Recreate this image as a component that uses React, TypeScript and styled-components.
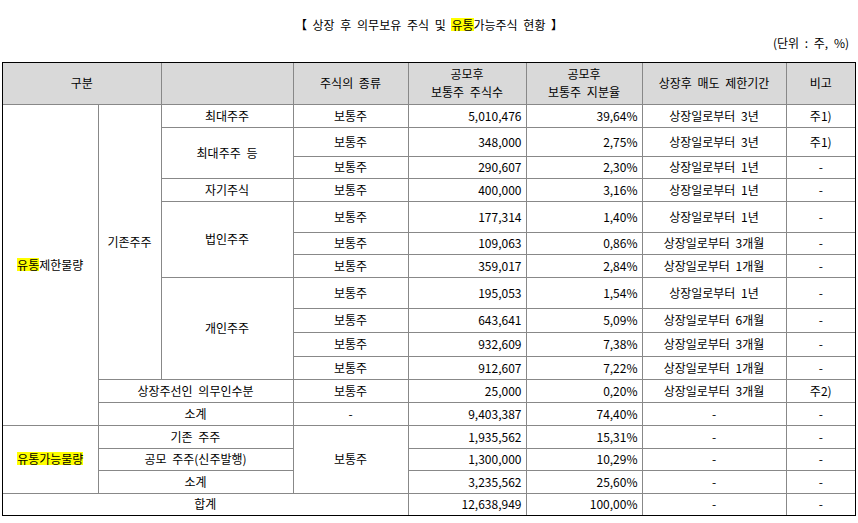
import React from "react";
import styled, { createGlobalStyle } from "styled-components";

const GlobalStyle = createGlobalStyle`
  html, body {
    margin: 0;
    padding: 0;
    background: #ffffff;
  }
  body {
    font-family: "Noto Sans CJK KR", "Noto Sans", sans-serif;
    font-size: 12px;
    color: #000000;
    word-spacing: 3px;
  }
`;

const Page = styled.div`
  width: 858px;
  box-sizing: border-box;
  padding: 0 2px;
`;

const Title = styled.div`
  padding-top: 17px;
  text-align: center;
  font-size: 12px;
  line-height: 16px;
`;

const Unit = styled.div`
  margin-top: 2px;
  padding-right: 7px;
  text-align: right;
  font-size: 12px;
  line-height: 16px;
`;

const Frame = styled.div`
  margin-top: 11px;
  border: 1px solid #000000;
`;

const Table = styled.table`
  width: 852px;
  table-layout: fixed;
  border-collapse: collapse;
  border-style: hidden;
`;

const Row = styled.tr<{ $h: number }>`
  height: ${(p) => p.$h}px;
`;

const HeadCell = styled.th`
  background: #d9d9d9;
  border: 1px solid #888888;
  font-weight: normal;
  font-size: 12px;
  line-height: 18px;
  text-align: center;
  vertical-align: middle;
  padding: 0;
`;

const Cell = styled.td<{ $align?: "center" | "right" }>`
  border: 1px solid #888888;
  font-size: 12px;
  line-height: 16px;
  padding: 0 ${(p) => (p.$align === "right" ? "4px" : "0")} 0 0;
  text-align: ${(p) => p.$align ?? "center"};
  vertical-align: middle;
  white-space: nowrap;
`;

const Mark = styled.span`
  display: inline-block;
  background: #ffff00;
  line-height: 13px;
  height: 13px;
`;

type DataRow = {
  shares: string;
  ratio: string;
  period: string;
  note: string;
};

const colWidths = [95, 63, 132, 115, 118, 116, 144, 69];

const Tail = ({ r }: { r: DataRow }) => (
  <>
    <Cell $align="right">{r.shares}</Cell>
    <Cell $align="right">{r.ratio}</Cell>
    <Cell>{r.period}</Cell>
    <Cell>{r.note}</Cell>
  </>
);

const P = "상장일로부터";

export default function App() {
  return (
    <>
      <GlobalStyle />
      <Page>
        <Title>
          【 상장 후 의무보유 주식 및 <Mark>유통</Mark>가능주식 현황 】
        </Title>
        <Unit>(단위 : 주, %)</Unit>
        <Frame>
          <Table>
            <colgroup>
              {colWidths.map((w, i) => (
                <col key={i} style={{ width: w }} />
              ))}
            </colgroup>
            <thead>
              <Row $h={41}>
                <HeadCell colSpan={2}>구분</HeadCell>
                <HeadCell />
                <HeadCell>주식의 종류</HeadCell>
                <HeadCell>
                  공모후
                  <br />
                  보통주 주식수
                </HeadCell>
                <HeadCell>
                  공모후
                  <br />
                  보통주 지분율
                </HeadCell>
                <HeadCell>상장후 매도 제한기간</HeadCell>
                <HeadCell>비고</HeadCell>
              </Row>
            </thead>
            <tbody>
              <Row $h={23}>
                <Cell rowSpan={13}>
                  <Mark>유통</Mark>제한물량
                </Cell>
                <Cell rowSpan={11}>기존주주</Cell>
                <Cell>최대주주</Cell>
                <Cell>보통주</Cell>
                <Tail r={{ shares: "5,010,476", ratio: "39,64%", period: `${P} 3년`, note: "주1)" }} />
              </Row>
              <Row $h={29}>
                <Cell rowSpan={2}>최대주주 등</Cell>
                <Cell>보통주</Cell>
                <Tail r={{ shares: "348,000", ratio: "2,75%", period: `${P} 3년`, note: "주1)" }} />
              </Row>
              <Row $h={22}>
                <Cell>보통주</Cell>
                <Tail r={{ shares: "290,607", ratio: "2,30%", period: `${P} 1년`, note: "-" }} />
              </Row>
              <Row $h={23}>
                <Cell>자기주식</Cell>
                <Cell>보통주</Cell>
                <Tail r={{ shares: "400,000", ratio: "3,16%", period: `${P} 1년`, note: "-" }} />
              </Row>
              <Row $h={31}>
                <Cell rowSpan={3}>법인주주</Cell>
                <Cell>보통주</Cell>
                <Tail r={{ shares: "177,314", ratio: "1,40%", period: `${P} 1년`, note: "-" }} />
              </Row>
              <Row $h={22}>
                <Cell>보통주</Cell>
                <Tail r={{ shares: "109,063", ratio: "0,86%", period: `${P} 3개월`, note: "-" }} />
              </Row>
              <Row $h={23}>
                <Cell>보통주</Cell>
                <Tail r={{ shares: "359,017", ratio: "2,84%", period: `${P} 1개월`, note: "-" }} />
              </Row>
              <Row $h={31}>
                <Cell rowSpan={4}>개인주주</Cell>
                <Cell>보통주</Cell>
                <Tail r={{ shares: "195,053", ratio: "1,54%", period: `${P} 1년`, note: "-" }} />
              </Row>
              <Row $h={24}>
                <Cell>보통주</Cell>
                <Tail r={{ shares: "643,641", ratio: "5,09%", period: `${P} 6개월`, note: "-" }} />
              </Row>
              <Row $h={24}>
                <Cell>보통주</Cell>
                <Tail r={{ shares: "932,609", ratio: "7,38%", period: `${P} 3개월`, note: "-" }} />
              </Row>
              <Row $h={23}>
                <Cell>보통주</Cell>
                <Tail r={{ shares: "912,607", ratio: "7,22%", period: `${P} 1개월`, note: "-" }} />
              </Row>
              <Row $h={23}>
                <Cell colSpan={2}>상장주선인 의무인수분</Cell>
                <Cell>보통주</Cell>
                <Tail r={{ shares: "25,000", ratio: "0,20%", period: `${P} 3개월`, note: "주2)" }} />
              </Row>
              <Row $h={23}>
                <Cell colSpan={2}>소계</Cell>
                <Cell>-</Cell>
                <Tail r={{ shares: "9,403,387", ratio: "74,40%", period: "-", note: "-" }} />
              </Row>
              <Row $h={23}>
                <Cell rowSpan={3}>
                  <Mark>유통가능물량</Mark>
                </Cell>
                <Cell colSpan={2}>기존 주주</Cell>
                <Cell rowSpan={3}>보통주</Cell>
                <Tail r={{ shares: "1,935,562", ratio: "15,31%", period: "-", note: "-" }} />
              </Row>
              <Row $h={22}>
                <Cell colSpan={2}>공모 주주(신주발행)</Cell>
                <Tail r={{ shares: "1,300,000", ratio: "10,29%", period: "-", note: "-" }} />
              </Row>
              <Row $h={23}>
                <Cell colSpan={2}>소계</Cell>
                <Tail r={{ shares: "3,235,562", ratio: "25,60%", period: "-", note: "-" }} />
              </Row>
              <Row $h={22}>
                <Cell colSpan={4}>합계</Cell>
                <Tail r={{ shares: "12,638,949", ratio: "100,00%", period: "-", note: "-" }} />
              </Row>
            </tbody>
          </Table>
        </Frame>
      </Page>
    </>
  );
}
